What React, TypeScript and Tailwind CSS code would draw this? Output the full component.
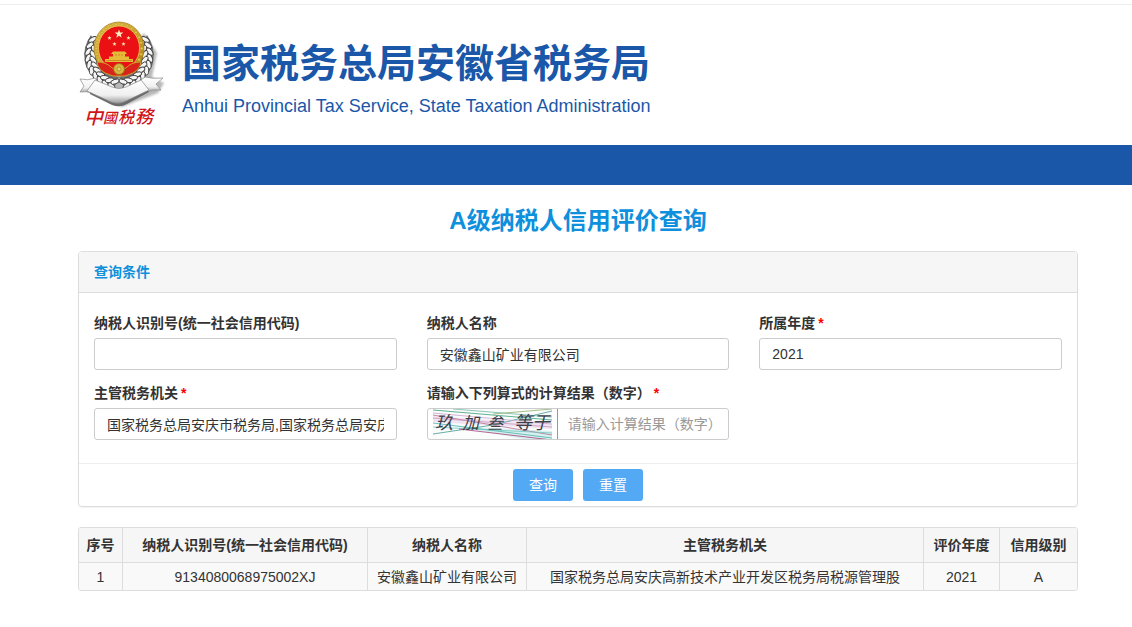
import { useState } from "react";
import type { ReactNode } from "react";

const FONT = "font-['Liberation_Sans','Noto_Sans_CJK_SC',sans-serif]";
const INPUT =
  "h-8 w-full rounded-[3px] border border-[#ccc] bg-white px-3 text-sm text-[#333] outline-none focus:border-[#54a9f4]";

function polar(cx: number, cy: number, r: number, deg: number) {
  const a = (deg * Math.PI) / 180;
  return { x: cx + r * Math.cos(a), y: cy + r * Math.sin(a) };
}

function star(cx: number, cy: number, r: number) {
  return Array.from({ length: 10 }, (_, i) => {
    const p = polar(cx, cy, i % 2 ? r * 0.4 : r, -90 + i * 36);
    return `${p.x.toFixed(2)},${p.y.toFixed(2)}`;
  }).join(" ");
}

function Leaf({ deg, r, tilt }: { deg: number; r: number; tilt: number }) {
  const p = polar(41, 35, r, deg);
  return (
    <ellipse
      cx={p.x}
      cy={p.y}
      rx="4.4"
      ry="2.3"
      fill="#f4f4f4"
      stroke="#3c3c3c"
      strokeWidth="0.9"
      transform={`rotate(${deg + tilt} ${p.x} ${p.y})`}
    />
  );
}

function Branch() {
  return (
    <g>
      <path d="M69 14Q78 26 75 42Q70 60 46 67L41 56Q64 50 64 24Z" fill="#6d6d6d" />
      {[-32, -20, -8, 4, 16, 28, 40, 52, 64, 76].map((d) => (
        <g key={d}>
          <Leaf deg={d} r={31} tilt={62} />
          <Leaf deg={d + 5} r={26} tilt={118} />
        </g>
      ))}
    </g>
  );
}

function Emblem() {
  const beads = Array.from({ length: 26 }, (_, i) => polar(0, 0, 1, i * (360 / 26)));
  return (
    <svg viewBox="0 0 88 110" className="h-[110px] w-[88px] shrink-0" role="img" aria-label="中國税務">
      <defs>
        <linearGradient id="gold" x1="0" y1="0" x2="1" y2="1">
          <stop offset="0" stopColor="#e3c552" />
          <stop offset="0.5" stopColor="#cfa72c" />
          <stop offset="1" stopColor="#a67c15" />
        </linearGradient>
        <linearGradient id="silver" x1="0" y1="0" x2="0" y2="1">
          <stop offset="0" stopColor="#fff" />
          <stop offset="0.65" stopColor="#f0f0f0" />
          <stop offset="1" stopColor="#999" />
        </linearGradient>
        <filter id="soft">
          <feGaussianBlur stdDeviation="1.2" />
        </filter>
      </defs>
      <path d="M66 12L79 32L74 56L86 62L80 72L44 86L12 72Z" fill="#8a8a8a" opacity="0.6" filter="url(#soft)" />
      <Branch />
      <g transform="translate(82 0) scale(-1 1)">
        <Branch />
      </g>
      <ellipse cx="41" cy="27.500" rx="25" ry="26.500" fill="url(#gold)" stroke="#a07a1c" strokeWidth="0.7" />
      {beads.map((p, i) => (
        <circle
          key={i}
          cx={41 + p.x * 22.7}
          cy={27.5 + p.y * 24.2}
          r="1.4"
          fill="#e2c656"
          stroke="#b28b22"
          strokeWidth="0.5"
        />
      ))}
      <ellipse cx="41" cy="27" rx="20.500" ry="22" fill="#ea1013" stroke="#f0d65e" strokeWidth="0.7" />
      <polygon points={star(41, 13, 4.6)} fill="#fff0c4" />
      <polygon points={star(31.5, 17, 2.3)} fill="#ffe3a8" />
      <polygon points={star(50.5, 17, 2.3)} fill="#ffe3a8" />
      <polygon points={star(36.5, 23, 2.3)} fill="#ffe3a8" />
      <polygon points={star(45.5, 23, 2.3)} fill="#ffe3a8" />
      <path d="M33 33L35 30.500H47L49 33ZM35 33H47V35.500H35ZM31 35.500H51V38H31ZM27 38H55V41H27Z" fill="#e5bc38" />
      <path d="M28 39.500H54M38 33V35M41 33V35M44 33V35" stroke="#c4611b" strokeWidth="0.6" />
      <path
        d="M19 41Q28 41 33 46L37 49H45L49 46Q54 41 63 41Q62 48 55 52L47 55H35L27 52Q20 48 19 41Z"
        fill="#d9231a"
        stroke="#d0a92c"
        strokeWidth="0.9"
      />
      <circle cx="41" cy="48" r="5.500" fill="#d8b53e" stroke="#987317" strokeWidth="1" />
      <circle cx="41" cy="48" r="2" fill="#e7cf74" stroke="#a9841e" strokeWidth="0.7" />
      <path d="M2 58Q10 60 17 57L22 63L14 72Q8 70 2 71L6 65Z" fill="url(#silver)" stroke="#8a8a8a" strokeWidth="0.7" />
      <path d="M85 57Q75 58 67 56L60 61L68 71Q76 68 83 69L78 63Z" fill="url(#silver)" stroke="#8a8a8a" strokeWidth="0.7" />
      <path d="M12 73L34 84Q42 87 49 83L71 71L69 69L12 70Z" fill="#6b6b6b" />
      <path d="M9 70L17 59L34 66Q41 69 48 66L63 59L71 69L48 80Q41 84 33 81Z" fill="url(#silver)" stroke="#888" strokeWidth="0.7" />
      <g fill="#cf1519" fontWeight="500" fontStyle="italic" fontFamily="'Noto Sans CJK SC', sans-serif">
        <text x="6" y="103" fontSize="19">中</text>
        <text x="25" y="102" fontSize="14">國</text>
        <text x="40" y="102" fontSize="16">税</text>
        <text x="57" y="102" fontSize="18">務</text>
      </g>
    </svg>
  );
}

function Captcha() {
  const lines = [
    ["M0 1L119 11", "#35a078"],
    ["M20 0L119 8", "#70b9a5"],
    ["M0 6L119 26", "#b86a8e"],
    ["M0 14L119 29", "#49b3aa"],
    ["M0 9L119 18", "#d094b4"],
    ["M0 25L60 16L119 2", "#439b91"],
    ["M0 18L119 24", "#6cc5c0"],
    ["M60 5L119 0", "#8fb06b"],
    ["M26 20L119 31", "#a83f78"],
    ["M0 4L119 15", "#c6a2cf"],
  ];
  return (
    <svg viewBox="0 0 119 30" className="h-[30px] w-[119px]" role="img" aria-label="玖加叁等于">
      <rect width="119" height="30" fill="#fbfcfc" />
      <path d="M0 7L119 15V20L0 13Z" fill="#efe4f3" />
      <path d="M20 17L119 22V30H90Z" fill="#d8f1f0" />
      <g fill="none" strokeWidth="0.8">
        {lines.map(([d, c]) => (
          <path key={d} d={d} stroke={c} />
        ))}
      </g>
      <g fill="#3d414a" fontStyle="italic" fontFamily="'Noto Sans CJK SC', sans-serif">
        <text x="2" y="20" fontSize="18">玖</text>
        <text x="29" y="20" fontSize="17">加</text>
        <text x="54" y="20" fontSize="16">叁</text>
        <text x="81" y="20" fontSize="18">等</text>
        <text x="99" y="20" fontSize="18">于</text>
      </g>
    </svg>
  );
}

function Field({ id, label, required, children }: { id: string; label: string; required?: boolean; children: ReactNode }) {
  return (
    <div className="min-w-0">
      <label htmlFor={id} className="mb-1 flex h-[22px] items-center gap-[3px] text-sm font-bold text-[#333]">
        {label}
        {required && <span className="text-[#f00]">*</span>}
      </label>
      {children}
    </div>
  );
}

const COLUMNS = [
  ["序号", "w-[44px]"],
  ["纳税人识别号(统一社会信用代码)", "w-[245px]"],
  ["纳税人名称", "w-[159px]"],
  ["主管税务机关", ""],
  ["评价年度", "w-[76px]"],
  ["信用级别", "w-[77px]"],
];

const ROWS = [
  ["1", "9134080068975002XJ", "安徽鑫山矿业有限公司", "国家税务总局安庆高新技术产业开发区税务局税源管理股", "2021", "A"],
];

const EMPTY = { code: "", name: "", year: "", office: "", answer: "" };

export default function App() {
  const [form, setForm] = useState({
    ...EMPTY,
    name: "安徽鑫山矿业有限公司",
    year: "2021",
    office: "国家税务总局安庆市税务局,国家税务总局安庆高新技术产业开发区税务局",
  });
  const bind = (key: keyof typeof EMPTY) => ({
    id: key,
    value: form[key],
    onChange: (e: { target: { value: string } }) => setForm({ ...form, [key]: e.target.value }),
  });

  return (
    <div lang="zh-CN" className={`${FONT} bg-white pt-1 text-sm text-[#333]`}>
      <header className="flex h-[141px] items-start gap-4 border-t border-[#eee] pt-4 pr-[54px] pl-[78px] text-[#1a57a8]">
        <Emblem />
        <div className="pt-4 whitespace-nowrap">
          <div className="text-[39px] leading-[54px] font-bold">国家税务总局安徽省税务局</div>
          <div className="text-lg leading-[30px]">Anhui Provincial Tax Service, State Taxation Administration</div>
        </div>
      </header>
      <nav className="h-10 bg-[#1a57a8]" />

      <main className="pt-4 pr-[54px] pb-9 pl-[78px]">
        <h1 className="text-center text-2xl leading-10 font-bold text-[#0e90dd]">A级纳税人信用评价查询</h1>

        <form
          className="mt-[10px] rounded-[4px] border border-[#ddd] shadow-[0_1px_1px_rgba(0,0,0,0.05)]"
          onSubmit={(e) => e.preventDefault()}
        >
          <h2 className="flex h-[41px] items-center rounded-t-[3px] border-b border-[#ddd] bg-[#f6f6f6] px-[15px] text-sm font-bold text-[#0e90dd]">
            查询条件
          </h2>
          <div className="grid grid-cols-3 gap-x-[30px] gap-y-3 px-[15px] pt-[19px] pb-[23px]">
            <Field id="code" label="纳税人识别号(统一社会信用代码)">
              <input {...bind("code")} className={INPUT} />
            </Field>
            <Field id="name" label="纳税人名称">
              <input {...bind("name")} className={INPUT} />
            </Field>
            <Field id="year" label="所属年度" required>
              <input {...bind("year")} className={INPUT} />
            </Field>
            <Field id="office" label="主管税务机关" required>
              <input {...bind("office")} className={INPUT} />
            </Field>
            <Field id="answer" label="请输入下列算式的计算结果（数字）" required>
              <div className="flex h-8 overflow-hidden rounded-[3px] border border-[#ccc]">
                <div className="flex w-[130px] shrink-0 justify-center border-r border-[#999]">
                  <Captcha />
                </div>
                <input
                  {...bind("answer")}
                  placeholder="请输入计算结果（数字）"
                  className="min-w-0 flex-1 pl-[10px] text-sm outline-none placeholder:text-[#999]"
                />
              </div>
            </Field>
          </div>
          <div className="flex justify-center gap-[10px] border-t border-[#eee] py-[5px]">
            <button type="submit" className="h-8 w-[60px] rounded-[3px] bg-[#54a9f4] text-sm text-white">
              查询
            </button>
            <button type="button" onClick={() => setForm(EMPTY)} className="h-8 w-[60px] rounded-[3px] bg-[#54a9f4] text-sm text-white">
              重置
            </button>
          </div>
        </form>

        <div className="mt-5 overflow-hidden rounded-[3px] border border-[#ddd]">
          <table className="w-full table-fixed border-separate border-spacing-0 text-center">
            <thead>
              <tr className="h-[35px] bg-[#f6f6f6]">
                {COLUMNS.map(([name, width]) => (
                  <th key={name} className={`${width} border-r border-b border-[#ddd] font-bold whitespace-nowrap last:border-r-0`}>
                    {name}
                  </th>
                ))}
              </tr>
            </thead>
            <tbody>
              {ROWS.map((row) => (
                <tr key={row[0]} className="h-[27px] bg-[#f9f9f9]">
                  {row.map((cell, i) => (
                    <td key={i} className="border-r border-[#ddd] whitespace-nowrap last:border-r-0">
                      {cell}
                    </td>
                  ))}
                </tr>
              ))}
            </tbody>
          </table>
        </div>
      </main>
    </div>
  );
}
